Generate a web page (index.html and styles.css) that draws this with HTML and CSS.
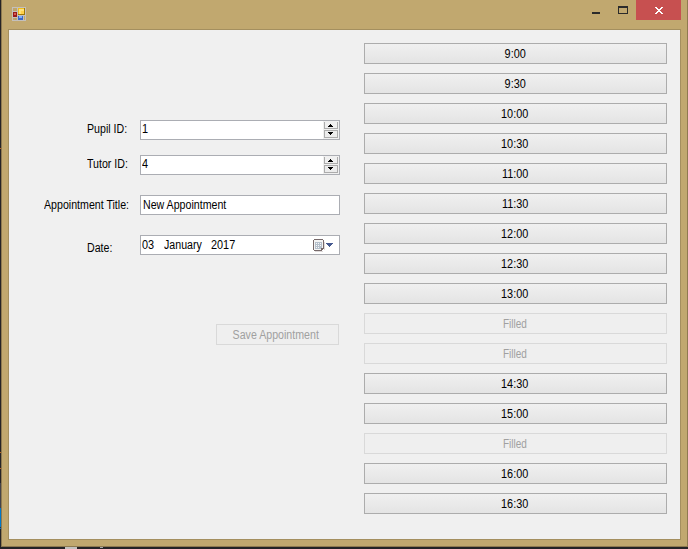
FILE: index.html
```html
<!DOCTYPE html>
<html lang="en">
<head>
<meta charset="utf-8">
<title>Appointment</title>
<link rel="stylesheet" href="styles.css">
</head>
<body>
<div class="desktop">
  <span class="mark blue"></span>
  <span class="mark o1"></span><span class="mark o2"></span><span class="mark o3"></span><span class="mark o4"></span><span class="mark o5"></span>
  <span class="mark task"></span><span class="mark task-dot"></span>
  <div class="window">
    <header class="titlebar">
      <svg class="app-icon" width="14" height="14" viewBox="0 0 14 14" shape-rendering="crispEdges">
        <path fill="#c4c0bc" d="M0 0h14v14H0z"/>
        <path fill="#bea56c" d="M1 1h4v3H1zM1 11h4v2H1zM12 9h1v4h-1z"/>
        <path fill="#b29b72" d="M3 11h1v2H3z"/>
        <path fill="#a07808" d="M6 1h7v7H6z"/><path fill="#eebc20" d="M6 1h6v6H6z"/><path fill="#ffe27a" d="M7 2h5v5H7z"/><path fill="#ffd04a" d="M9 4h3v3H9z"/>
        <path fill="#991a1a" d="M1 5h4v5H1z"/><path fill="#d85a50" d="M2 6h2v2H2z"/>
        <path fill="#3a68c8" d="M6 9h5v4H6z"/><path fill="#80b0f8" d="M7 9h3v2H7z"/>
      </svg>
      <div class="controls">
        <svg width="116" height="20" viewBox="0 0 116 20" shape-rendering="crispEdges">
          <path fill="#2b2b2b" d="M22 12h8v2h-8z"/>
          <path fill="#2b2b2b" fill-rule="evenodd" d="M48 6h10v8H48zM49 8v5h8V8z"/>
          <path fill="#c75050" d="M66 0h45v20H66z"/>
          <path fill="#fff" d="M85 7h2v1h-2zM91 7h2v1h-2zM86 8h2v1h-2zM90 8h2v1h-2zM87 9h4v1h-4zM88 10h2v1h-2zM87 11h4v1h-4zM86 12h2v1h-2zM90 12h2v1h-2zM85 13h2v1h-2zM91 13h2v1h-2z"/>
        </svg>
      </div>
    </header>
    <main class="client">
      <form class="form">
        <div class="row pupil"><span class="label"><span class="t">Pupil ID:</span></span>
          <div class="field number"><span class="t num">1</span>
            <svg class="spin" width="16" height="18" viewBox="0 0 16 18" shape-rendering="crispEdges"><path fill="#f0f0f0" d="M0 0h16v18H0z"/><path fill="#acacac" d="M1 1h1v6h12V1h1v7H1zM1 9h14v8H1z"/><path fill="#ececec" d="M2 10h12v6H2z"/><path d="M7 3h1v1h1v1h1v1H5V5h1V4h1zM5 11h5v1H9v1H8v1H7v-1H6v-1H5z"/></svg>
          </div></div>
        <div class="row tutor"><span class="label"><span class="t">Tutor ID:</span></span>
          <div class="field number"><span class="t num">4</span>
            <svg class="spin" width="16" height="18" viewBox="0 0 16 18" shape-rendering="crispEdges"><path fill="#f0f0f0" d="M0 0h16v18H0z"/><path fill="#acacac" d="M1 1h1v6h12V1h1v7H1zM1 9h14v8H1z"/><path fill="#ececec" d="M2 10h12v6H2z"/><path d="M7 3h1v1h1v1h1v1H5V5h1V4h1zM5 11h5v1H9v1H8v1H7v-1H6v-1H5z"/></svg>
          </div></div>
        <div class="row title"><span class="label"><span class="t">Appointment Title:</span></span>
          <div class="field text"><span class="t">New Appointment</span></div></div>
        <div class="row date"><span class="label"><span class="t">Date:</span></span>
          <div class="field picker"><span class="t num day">03</span><span class="t month">January</span><span class="t num year">2017</span>
            <svg class="calendar" width="22" height="14" viewBox="0 0 22 14" shape-rendering="crispEdges">
              <path fill="#dedada" d="M2 12h8v1H2zM11 3h1v8h-1z"/>
              <path fill="#76696a" d="M1 0h9v1h1v9h-1v1H9v1H1v-1H0V1h1z"/>
              <path fill="#f4f4f4" d="M1 1h9v8H8v2H1z"/>
              <path fill="#b4bfcb" d="M2 3h7v6H8v1H2z"/>
              <path fill="#f7f7f7" d="M3 4h1v1H3zM5 4h1v1H5zM7 4h1v1H7zM3 6h1v1H3zM5 6h1v1H5zM7 6h1v1H7zM3 8h1v1H3zM5 8h1v1H5z"/>
              <path fill="#465a90" d="M13 4h7v1h-1v1h-1v1h-1v1h-1V7h-1V6h-1V5h-1z"/>
            </svg>
          </div></div>
        <button class="btn save" type="button" disabled><span>Save Appointment</span></button>
      </form>
      <div class="slots">
        <button class="btn"><span>9:00</span></button>
        <button class="btn"><span>9:30</span></button>
        <button class="btn"><span>10:00</span></button>
        <button class="btn"><span>10:30</span></button>
        <button class="btn"><span>11:00</span></button>
        <button class="btn"><span>11:30</span></button>
        <button class="btn"><span>12:00</span></button>
        <button class="btn"><span>12:30</span></button>
        <button class="btn"><span>13:00</span></button>
        <button class="btn filled" disabled><span>Filled</span></button>
        <button class="btn filled" disabled><span>Filled</span></button>
        <button class="btn"><span>14:30</span></button>
        <button class="btn"><span>15:00</span></button>
        <button class="btn filled" disabled><span>Filled</span></button>
        <button class="btn"><span>16:00</span></button>
        <button class="btn"><span>16:30</span></button>
      </div>
    </main>
  </div>
</div>
</body>
</html>
```
FILE: styles.css
```css
* { box-sizing: border-box; }
body { margin: 0; }
.desktop {
  position: relative;
  width: 688px;
  height: 549px;
  padding: 0 0 2px 1px;
  overflow: hidden;
  background: #252326;
  color: #000;
  font: 12.5px/14px "Liberation Sans", Arial, sans-serif;
}
.mark { position: absolute; left: 0; width: 1px; height: 1px; background: #b86420; }
.blue { top: 508px; height: 21px; background: #0078c8; }
.o1 { top: 148px; }
.o2 { top: 452px; }
.o3 { top: 468px; }
.o4 { top: 527px; background: #333; }
.o5 { top: 483px; height: 25px; background: #444248; }
.task { top: 547px; left: 65px; width: 12px; height: 2px; background: #c4c2c0; }
.task-dot { top: 547px; left: 100px; width: 3px; background: #aaa; }
.window {
  height: 547px;
  padding: 0 6px 6px;
  border: solid #8e7a50;
  border-width: 0 1px 1px;
  background: #c1a86f;
}
.titlebar { display: flex; justify-content: space-between; height: 29px; }
.app-icon { margin: 7px 0 0 4px; }
.controls { height: 20px; margin-right: -5px; }
.controls svg { display: block; }
.client {
  display: flex;
  justify-content: space-between;
  height: 511px;
  padding: 13px 13px 0 34px;
  border: 1px solid #a48f5f;
  background: #f0f0f0;
}
.form { display: flex; flex-direction: column; width: 297px; padding-top: 77px; }
.row { display: flex; height: 20px; margin-bottom: 15px; }
.title { margin: 5px 0 20px; }
.date { margin: 0; }
.t { display: inline-block; transform: scaleX(.85); transform-origin: 0 0; }
.num { transform: scaleX(.87); }
.label { flex: none; width: 97px; padding: 2px 0 0 1px; white-space: nowrap; }
.pupil .label, .tutor .label, .date .label { padding-left: 44px; }
.title .label { padding-top: 3px; }
.date .label { padding-top: 6px; }
.field {
  display: flex;
  flex: none;
  width: 200px;
  height: 20px;
  border: 1px solid #abadb3;
  background: #fff;
  line-height: 17px;
  white-space: nowrap;
}
.number .t { margin-left: 1px; }
.text .t { margin-left: 2px; line-height: 18px; }
.picker .t { flex: none; line-height: 18px; }
.day { width: 22px; margin-left: 1px; }
.month { width: 47px; }
.spin { margin-left: auto; }
.calendar { margin: 3px 4px 0 auto; }
.btn {
  height: 21px;
  padding: 0 1px 0 0;
  border: 1px solid #acacac;
  background: linear-gradient(#f0f0f0, #e4e4e4);
  color: #000;
  font: inherit;
  text-align: center;
}
.btn span { display: inline-block; transform: scaleX(.87); }
.btn:disabled { border-color: #d9d9d9; background: #efefef; color: #a0a0a0; }
.btn.filled { padding: 0 2px 0 0; }
.filled span { transform: scaleX(.8); }
.save { width: 123px; margin: 69px 0 0 173px; padding-right: 3px; }
.save span { transform: scaleX(.85); }
.slots { display: flex; flex-direction: column; gap: 9px; width: 303px; }
```
